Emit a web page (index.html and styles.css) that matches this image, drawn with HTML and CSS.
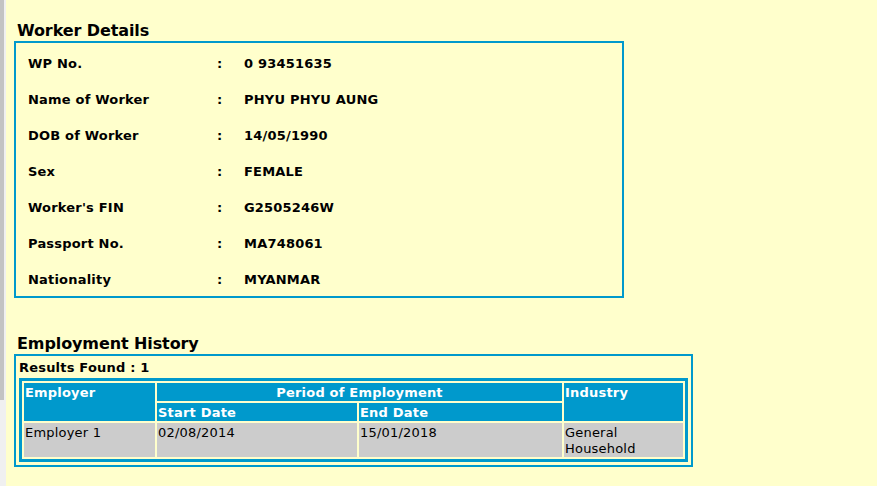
FILE: index.html
```html
<!DOCTYPE html>
<html lang="en">
<head>
<meta charset="utf-8">
<title>Worker Details</title>
<link rel="stylesheet" href="styles.css">
</head>
<body>
<div class="page">
  <div class="rail"><div class="thumb"></div></div>
  <main class="content">
    <h3 class="title">Worker Details</h3>
    <div class="details">
      <div class="row"><span class="label">WP No.</span><span class="colon">:</span><span class="value">0 93451635</span></div>
      <div class="row"><span class="label">Name of Worker</span><span class="colon">:</span><span class="value">PHYU PHYU AUNG</span></div>
      <div class="row"><span class="label">DOB of Worker</span><span class="colon">:</span><span class="value">14/05/1990</span></div>
      <div class="row"><span class="label">Sex</span><span class="colon">:</span><span class="value">FEMALE</span></div>
      <div class="row"><span class="label">Worker's FIN</span><span class="colon">:</span><span class="value">G2505246W</span></div>
      <div class="row"><span class="label">Passport No.</span><span class="colon">:</span><span class="value">MA748061</span></div>
      <div class="row"><span class="label">Nationality</span><span class="colon">:</span><span class="value">MYANMAR</span></div>
    </div>

    <h3 class="title title-2">Employment History</h3>
    <div class="history">
      <div class="results">Results Found : 1</div>
      <table class="emp">
        <colgroup>
          <col class="c-emp">
          <col class="c-start">
          <col class="c-end">
          <col class="c-ind">
        </colgroup>
        <thead>
          <tr>
            <th rowspan="2">Employer</th>
            <th colspan="2" class="center">Period of Employment</th>
            <th rowspan="2">Industry</th>
          </tr>
          <tr>
            <th>Start Date</th>
            <th>End Date</th>
          </tr>
        </thead>
        <tbody>
          <tr>
            <td>Employer 1</td>
            <td>02/08/2014</td>
            <td>15/01/2018</td>
            <td>General<br>Household</td>
          </tr>
        </tbody>
      </table>
    </div>
  </main>
</div>
</body>
</html>
```

FILE: styles.css
```css
html, body {
  margin: 0;
  padding: 0;
  background: #ffffcc;
}

.page {
  display: flex;
  min-height: 486px;
}

.rail {
  flex: none;
  width: 6px;
  background: #f0f0f0;
}

.thumb {
  width: 4px;
  height: 400px;
  background: #c3c3c3;
}

.content {
  flex: 1;
  padding-left: 8px;
  font-family: "DejaVu Sans", Verdana, sans-serif;
  color: #000;
}

.title {
  margin: 0;
  padding: 21px 0 1px 3px;
  font-size: 16px;
  line-height: 19px;
  font-weight: bold;
  letter-spacing: -0.1px;
}

.title-2 {
  padding-top: 36px;
}

.details {
  box-sizing: border-box;
  width: 610px;
  border: 2px solid #0099cc;
  padding: 1px 0 0 12px;
}

.row {
  display: grid;
  grid-template-columns: 189px 27px 1fr;
  height: 36px;
  line-height: 39px;
  font-size: 13px;
  font-weight: bold;
  letter-spacing: 0.2px;
}

.history {
  box-sizing: border-box;
  width: 679px;
  border: 2px solid #0099cc;
  padding: 3px;
}

.results {
  font-size: 13px;
  line-height: 16px;
  font-weight: bold;
  letter-spacing: 0.2px;
  padding-top: 1px;
  margin-bottom: 2px;
}

.emp {
  width: 669px;
  table-layout: fixed;
  border-collapse: separate;
  border-spacing: 2px;
  border: 3px solid #0099cc;
  font-size: 13px;
  line-height: 16px;
  letter-spacing: 0.2px;
}

.c-emp { width: 131px; }
.c-start { width: 200px; }
.c-end { width: 203px; }
.c-ind { width: 119px; }

.emp th,
.emp td {
  padding: 2px 1px 0;
  vertical-align: top;
  text-align: left;
}

.emp th {
  background: #0099cc;
  color: #ffffff;
  font-weight: bold;
}

.emp th.center {
  text-align: center;
}

.emp td {
  background: #cccccc;
  color: #000;
  font-weight: normal;
}
```
